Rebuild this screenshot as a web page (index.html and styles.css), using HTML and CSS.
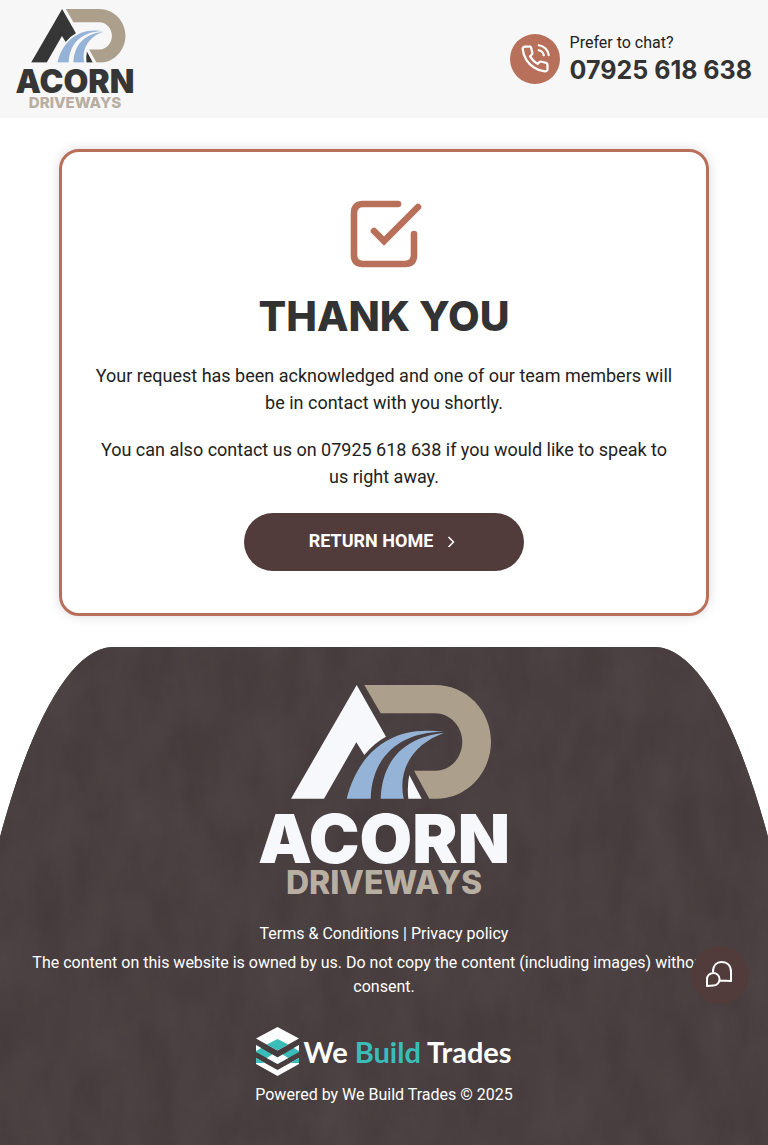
FILE: index.html
```html
<!DOCTYPE html>
<html lang="en">
<head>
<meta charset="utf-8">
<meta name="viewport" content="width=device-width, initial-scale=1">
<title>Thank You | Acorn Driveways</title>
<link rel="stylesheet" href="styles.css">
</head>
<body>
<svg class="defs" aria-hidden="true">
  <symbol id="acorn-mark" viewBox="0 0 250 114">
    <path fill="currentColor" d="M97.700 0L127 51.700Q115 58 105.300 70L97.300 57.300L65 113.700H32ZM150.300 90L162.700 113.700H149.300Q148 101 150.300 90Z"/>
    <path fill="#aca08c" d="M105.300 0H176C208 0 232 26 232 56.700S208 113.700 178 113.700H170.300L155 85.700H177C192 85.700 203.300 72 203.300 56.700S191 28.300 176 28.300H121.700Z"/>
    <path fill="#95b3d7" d="M87.700 113.700C99 69 131 39 185 47C148 46 113 66 111.700 113.700ZM121.700 113.700C123 76 145 52 185 48C156 58 138 83 144.700 113.700Z"/>
  </symbol>
</svg>

<header class="site-header">
  <a href="#" aria-label="Acorn Driveways home">
    <svg class="logo header-logo" viewBox="0 0 250 210">
      <use href="#acorn-mark" width="250" height="114"/>
      <text class="logo-name" x="125" y="178" text-anchor="middle">ACORN</text>
      <text class="logo-sub" x="125" y="209" text-anchor="middle">DRIVEWAYS</text>
    </svg>
  </a>
  <a class="call" href="tel:07925618638">
    <span class="call-icon">
      <svg width="30" height="30" viewBox="0 0 24 24" fill="none" stroke="currentColor" stroke-width="1.800" stroke-linecap="round" stroke-linejoin="round"><path d="M15.050 5A5 5 0 0 1 19 8.950M15.050 1A9 9 0 0 1 23 8.940m-1 7.980v3a2 2 0 0 1-2.180 2 19.790 19.790 0 0 1-8.630-3.070 19.500 19.500 0 0 1-6-6 19.790 19.790 0 0 1-3.070-8.670A2 2 0 0 1 4.110 2h3a2 2 0 0 1 2 1.720 12.840 12.840 0 0 0 .7 2.810 2 2 0 0 1-.45 2.110L8.090 9.910a16 16 0 0 0 6 6l1.270-1.270a2 2 0 0 1 2.110-.45 12.840 12.840 0 0 0 2.810.7A2 2 0 0 1 22 16.920z"/></svg>
    </span>
    <span class="call-text"><span>Prefer to chat?</span><strong class="call-number">07925 618 638</strong></span>
  </a>
</header>

<main class="main">
  <section class="card">
    <svg class="card-icon" width="72" height="68" viewBox="-2 0 72 68" fill="none" stroke="currentColor" stroke-width="6.600" stroke-linecap="round" stroke-linejoin="miter"><path d="M48 4H13Q4 4 4 13V55Q4 64 13 64H55Q64 64 64 55V34M24 31L34 41L68 7"/></svg>
    <h1 class="title">THANK YOU</h1>
    <p class="message">Your request has been acknowledged and one of our team members will be in contact with you shortly.</p>
    <p class="message">You can also contact us on <a href="tel:07925618638">07925 618 638</a> if you would like to speak to us right away.</p>
    <a class="button" href="#">RETURN HOME
      <svg width="12" height="12" viewBox="0 0 12 12" fill="none" stroke="currentColor" stroke-width="1.500"><path d="M1.500 2L6.500 7L1.500 12"/></svg>
    </a>
  </section>
</main>

<footer class="footer">
  <svg class="footer-bg" viewBox="0 0 768 498" preserveAspectRatio="none" aria-hidden="true">
    <defs>
      <clipPath id="dome"><path d="M0 190C30 78 70 2 112 0H656C698 2 738 78 768 190V498H0Z"/></clipPath>
      <filter id="grain" x="0" y="0" width="100%" height="100%" color-interpolation-filters="sRGB">
        <feTurbulence type="fractalNoise" baseFrequency="0.028 0.014" numOctaves="4" seed="8"/>
        <feColorMatrix values="0.050 0 0 0 0.263  0.050 0 0 0 0.223  0.050 0 0 0 0.226  0 0 0 0 1"/>
      </filter>
    </defs>
    <g clip-path="url(#dome)"><rect width="768" height="498" fill="#493e3f"/><rect width="768" height="498" filter="url(#grain)"/></g>
  </svg>
  <svg class="logo footer-logo" viewBox="0 0 250 210" role="img" aria-label="Acorn Driveways">
    <use href="#acorn-mark" width="250" height="114"/>
    <text class="logo-name" x="125" y="178" text-anchor="middle">ACORN</text>
    <text class="logo-sub" x="125" y="209" text-anchor="middle">DRIVEWAYS</text>
  </svg>
  <p class="links"><a href="#">Terms &amp; Conditions</a> | <a href="#">Privacy policy</a></p>
  <p class="legal">The content on this website is owned by us. Do not copy the content (including images) without our consent.</p>
  <a class="builder" href="#">
    <svg width="43" height="49" viewBox="0 0 42 49" preserveAspectRatio="none" aria-hidden="true">
      <path fill="#fff" d="M21 0L42 11.500L21 23.500L0 11.500ZM0 31L21 43L42 31V37L21 49L0 37Z"/>
      <path fill="#3abdb8" d="M21 12L31.500 17.500L21 23.500L10.500 17.500ZM0 18L21 30.500L42 18V25L21 37L0 25ZM0 31L9 36H0ZM42 31L33 36H42Z"/>
      <path fill="#fff" d="M10.500 31L16 27.500L21 30.500L26 27.500L31.500 31L21 37ZM0 18L5 21L0 24ZM42 18L37 21L42 24Z"/>
    </svg>
    <span>We <span class="teal">Build</span> Trades</span>
  </a>
  <p class="powered">Powered by We Build Trades © 2025</p>
</footer>

<button class="chat" type="button" aria-label="Open chat">
  <svg width="30" height="30" viewBox="0 0 30 30" fill="none" stroke="currentColor" stroke-width="2" stroke-linejoin="round"><path d="M2 26V19.500A6.300 6.300 0 1 1 8.300 25.500ZM8 12C8 5 12 2 16.500 2C22.500 2 26 6 26 12V21L15 20.500"/></svg>
</button>
</body>
</html>
```
FILE: styles.css
```css
* { box-sizing: border-box; }

body {
  margin: 0;
  background: #fff;
  color: #222;
  font-family: Roboto, "Liberation Sans", sans-serif;
  font-size: 16px;
  line-height: 24px;
}

a { color: inherit; text-decoration: none; }
p, h1 { margin: 0; }
svg { display: block; }
.defs { position: absolute; width: 0; height: 0; }

.logo { overflow: visible; }
.logo-name, .logo-sub { font-family: Inter, sans-serif; }
.logo-name { font-size: 68px; font-weight: 900; fill: currentColor; }
.logo-sub { font-size: 32px; font-weight: 800; fill: #b8aea2; }

.site-header {
  display: flex;
  align-items: center;
  justify-content: space-between;
  padding: 9px 16px 10px;
  background: #f7f7f7;
}
.header-logo { width: 118px; height: 99px; color: #363636; }
.call { display: flex; align-items: center; gap: 10px; }
.call-icon {
  display: grid;
  place-items: center;
  width: 50px;
  height: 50px;
  border-radius: 50%;
  background: #b8705b;
  color: #fff;
}
.call-text { display: flex; flex-direction: column; padding-bottom: 2px; }
.call-number {
  font-family: Inter, sans-serif;
  font-size: 25px;
  line-height: 30px;
  color: #333;
}

.main { padding: 31px 32px; }
.card {
  display: flex;
  flex-direction: column;
  align-items: center;
  max-width: 650px;
  margin: 0 auto;
  padding: 48px 30px 42px;
  border: 3px solid #b8705b;
  border-radius: 20px;
  box-shadow: 0 0 12px rgba(0, 0, 0, .15);
  text-align: center;
}
.card-icon { overflow: visible; color: #b8705b; }
.title {
  margin: 22px 0 20px;
  font-family: Inter, sans-serif;
  font-size: 41px;
  font-weight: 800;
  line-height: 52px;
  color: #333;
}
.message { margin-bottom: 20px; font-size: 18px; line-height: 27px; }
.button {
  display: flex;
  align-items: center;
  justify-content: center;
  gap: 14px;
  width: 280px;
  min-height: 58px;
  margin-top: 3px;
  padding-bottom: 2px;
  border-radius: 29px;
  background: #523c3b;
  color: #fff;
  font-size: 18px;
  font-weight: 700;
}

.footer {
  position: relative;
  isolation: isolate;
  display: flex;
  flex-direction: column;
  align-items: center;
  padding: 38px 32px;
  color: #fff;
  text-align: center;
}
.footer-bg { position: absolute; inset: 0; z-index: -1; width: 100%; height: 100%; }
.footer-logo { width: 250px; height: 210px; color: #f6f8fc; }
.links { margin-top: 27px; }
.legal { margin-top: 5px; }
.builder {
  display: flex;
  align-items: center;
  gap: 4px;
  margin: 28px 0 7px;
  font-family: Lato, sans-serif;
  font-size: 29px;
  font-weight: 700;
  line-height: 49px;
}
.teal { color: #3abdb8; }

.chat {
  position: fixed;
  right: 19px;
  bottom: 141px;
  display: grid;
  place-items: center;
  width: 58px;
  height: 58px;
  padding: 0;
  border: 0;
  border-radius: 50%;
  background: #523c3b;
  color: #fff;
}
```
